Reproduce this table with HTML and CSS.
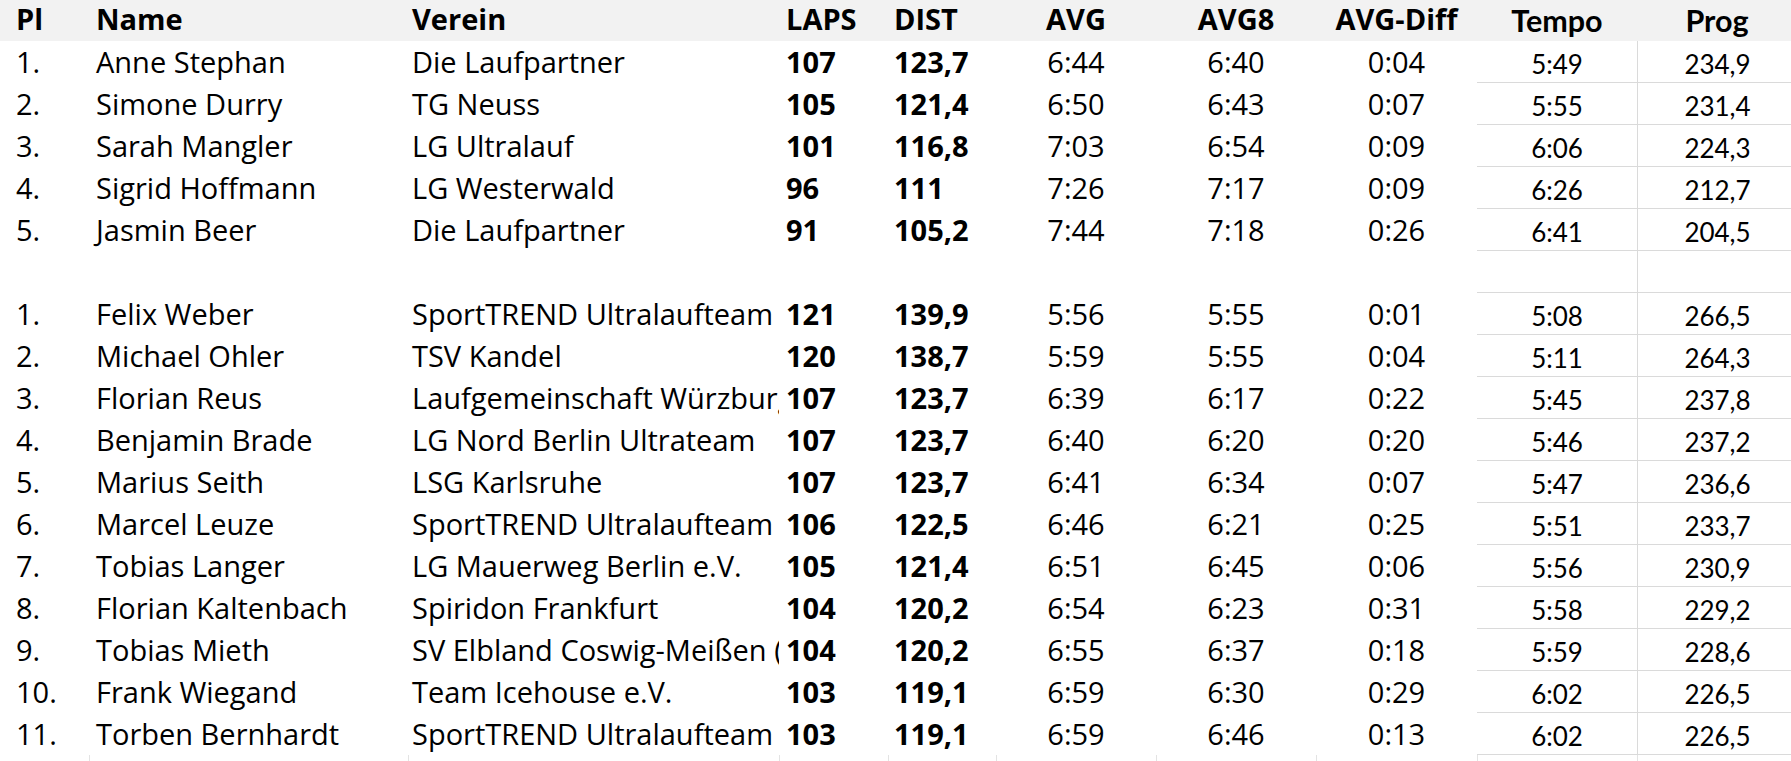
FILE: index.html
```html
<!DOCTYPE html>
<html lang="de">
<head>
<meta charset="utf-8">
<title>Ergebnisliste</title>
<link rel="stylesheet" href="styles.css">
</head>
<body>
<div class="sheet">
  <div class="row hdr">
    <div class="c pl">Pl</div>
    <div class="c name">Name</div>
    <div class="c verein">Verein</div>
    <div class="c laps">LAPS</div>
    <div class="c dist">DIST</div>
    <div class="c avg">AVG</div>
    <div class="c avg8">AVG8</div>
    <div class="c diff">AVG-Diff</div>
    <div class="c tempo">Tempo</div>
    <div class="c prog">Prog</div>
  </div>

  <div class="row"><div class="c pl">1.</div><div class="c name">Anne Stephan</div><div class="c verein">Die Laufpartner</div><div class="c laps">107</div><div class="c dist">123,7</div><div class="c avg">6:44</div><div class="c avg8">6:40</div><div class="c diff">0:04</div><div class="c tempo">5:49</div><div class="c prog">234,9</div></div>
  <div class="row"><div class="c pl">2.</div><div class="c name">Simone Durry</div><div class="c verein">TG Neuss</div><div class="c laps">105</div><div class="c dist">121,4</div><div class="c avg">6:50</div><div class="c avg8">6:43</div><div class="c diff">0:07</div><div class="c tempo">5:55</div><div class="c prog">231,4</div></div>
  <div class="row"><div class="c pl">3.</div><div class="c name">Sarah Mangler</div><div class="c verein">LG Ultralauf</div><div class="c laps">101</div><div class="c dist">116,8</div><div class="c avg">7:03</div><div class="c avg8">6:54</div><div class="c diff">0:09</div><div class="c tempo">6:06</div><div class="c prog">224,3</div></div>
  <div class="row"><div class="c pl">4.</div><div class="c name">Sigrid Hoffmann</div><div class="c verein">LG Westerwald</div><div class="c laps">96</div><div class="c dist">111</div><div class="c avg">7:26</div><div class="c avg8">7:17</div><div class="c diff">0:09</div><div class="c tempo">6:26</div><div class="c prog">212,7</div></div>
  <div class="row"><div class="c pl">5.</div><div class="c name">Jasmin Beer</div><div class="c verein">Die Laufpartner</div><div class="c laps">91</div><div class="c dist">105,2</div><div class="c avg">7:44</div><div class="c avg8">7:18</div><div class="c diff">0:26</div><div class="c tempo">6:41</div><div class="c prog">204,5</div></div>
  <div class="row"><div class="c pl"></div><div class="c name"></div><div class="c verein"></div><div class="c laps"></div><div class="c dist"></div><div class="c avg"></div><div class="c avg8"></div><div class="c diff"></div><div class="c tempo"></div><div class="c prog"></div></div>

  <div class="row"><div class="c pl">1.</div><div class="c name">Felix Weber</div><div class="c verein">SportTREND Ultralaufteam</div><div class="c laps">121</div><div class="c dist">139,9</div><div class="c avg">5:56</div><div class="c avg8">5:55</div><div class="c diff">0:01</div><div class="c tempo">5:08</div><div class="c prog">266,5</div></div>
  <div class="row"><div class="c pl">2.</div><div class="c name">Michael Ohler</div><div class="c verein">TSV Kandel</div><div class="c laps">120</div><div class="c dist">138,7</div><div class="c avg">5:59</div><div class="c avg8">5:55</div><div class="c diff">0:04</div><div class="c tempo">5:11</div><div class="c prog">264,3</div></div>
  <div class="row"><div class="c pl">3.</div><div class="c name">Florian Reus</div><div class="c verein">Laufgemeinschaft Würzburg</div><div class="c laps">107</div><div class="c dist">123,7</div><div class="c avg">6:39</div><div class="c avg8">6:17</div><div class="c diff">0:22</div><div class="c tempo">5:45</div><div class="c prog">237,8</div></div>
  <div class="row"><div class="c pl">4.</div><div class="c name">Benjamin Brade</div><div class="c verein">LG Nord Berlin Ultrateam</div><div class="c laps">107</div><div class="c dist">123,7</div><div class="c avg">6:40</div><div class="c avg8">6:20</div><div class="c diff">0:20</div><div class="c tempo">5:46</div><div class="c prog">237,2</div></div>
  <div class="row"><div class="c pl">5.</div><div class="c name">Marius Seith</div><div class="c verein">LSG Karlsruhe</div><div class="c laps">107</div><div class="c dist">123,7</div><div class="c avg">6:41</div><div class="c avg8">6:34</div><div class="c diff">0:07</div><div class="c tempo">5:47</div><div class="c prog">236,6</div></div>
  <div class="row"><div class="c pl">6.</div><div class="c name">Marcel Leuze</div><div class="c verein">SportTREND Ultralaufteam</div><div class="c laps">106</div><div class="c dist">122,5</div><div class="c avg">6:46</div><div class="c avg8">6:21</div><div class="c diff">0:25</div><div class="c tempo">5:51</div><div class="c prog">233,7</div></div>
  <div class="row"><div class="c pl">7.</div><div class="c name">Tobias Langer</div><div class="c verein">LG Mauerweg Berlin e.V.</div><div class="c laps">105</div><div class="c dist">121,4</div><div class="c avg">6:51</div><div class="c avg8">6:45</div><div class="c diff">0:06</div><div class="c tempo">5:56</div><div class="c prog">230,9</div></div>
  <div class="row"><div class="c pl">8.</div><div class="c name">Florian Kaltenbach</div><div class="c verein">Spiridon Frankfurt</div><div class="c laps">104</div><div class="c dist">120,2</div><div class="c avg">6:54</div><div class="c avg8">6:23</div><div class="c diff">0:31</div><div class="c tempo">5:58</div><div class="c prog">229,2</div></div>
  <div class="row"><div class="c pl">9.</div><div class="c name">Tobias Mieth</div><div class="c verein">SV Elbland Coswig-Meißen (Sachsen)</div><div class="c laps">104</div><div class="c dist">120,2</div><div class="c avg">6:55</div><div class="c avg8">6:37</div><div class="c diff">0:18</div><div class="c tempo">5:59</div><div class="c prog">228,6</div></div>
  <div class="row"><div class="c pl">10.</div><div class="c name">Frank Wiegand</div><div class="c verein">Team Icehouse e.V.</div><div class="c laps">103</div><div class="c dist">119,1</div><div class="c avg">6:59</div><div class="c avg8">6:30</div><div class="c diff">0:29</div><div class="c tempo">6:02</div><div class="c prog">226,5</div></div>
  <div class="row"><div class="c pl">11.</div><div class="c name">Torben Bernhardt</div><div class="c verein">SportTREND Ultralaufteam</div><div class="c laps">103</div><div class="c dist">119,1</div><div class="c avg">6:59</div><div class="c avg8">6:46</div><div class="c diff">0:13</div><div class="c tempo">6:02</div><div class="c prog">226,5</div></div>

  <div class="row tail"><div class="c"></div><div class="c"></div><div class="c"></div><div class="c"></div><div class="c"></div><div class="c"></div><div class="c"></div><div class="c"></div><div class="c"></div><div class="c"></div></div>
</div>
</body>
</html>
```

FILE: styles.css
```css
html, body {
  margin: 0;
  padding: 0;
  background: #ffffff;
  overflow: hidden;
}

.sheet {
  width: 1797px;
  font-family: "Open Sans", "Noto Sans", "DejaVu Sans", sans-serif;
  font-size: 29px;
  color: #000;
}

.row {
  display: grid;
  grid-template-columns: 89px 319px 371px 109px 108px 160px 160px 161px 160px 160px;
  height: 42px;
}

.c {
  box-sizing: border-box;
  height: 42px;
  line-height: 42px;
  white-space: nowrap;
  overflow: hidden;
}

.pl { padding-left: 16px; }
.name { padding-left: 7px; }
.verein { padding-left: 4px; }
.laps { padding-left: 7px; font-weight: 700; }
.dist { padding-left: 6px; font-weight: 700; }
.avg, .avg8, .diff { text-align: center; }

.tempo, .prog {
  font-family: "Lato", "Liberation Sans", sans-serif;
  font-size: 26px;
  text-align: center;
  line-height: 38px;
  padding-top: 4px;
  border-bottom: 1px solid #dadada;
}
.prog { border-left: 1px solid #dadada; }

/* header */
.hdr {
  height: 41px;
  background: #f2f2f2;
}
.hdr .c {
  height: 41px;
  line-height: 37px;
  padding-top: 0;
  font-weight: 700;
  border: none;
  background: #f2f2f2;
}
.hdr .tempo, .hdr .prog {
  font-size: 30.5px;
  line-height: 40px;
}

/* gridline strip under the table */
.tail { height: 6px; }
.tail .c {
  height: 6px;
  border-left: 1px solid #e3e3e3;
}
.tail .c:first-child { border-left: none; }
```
